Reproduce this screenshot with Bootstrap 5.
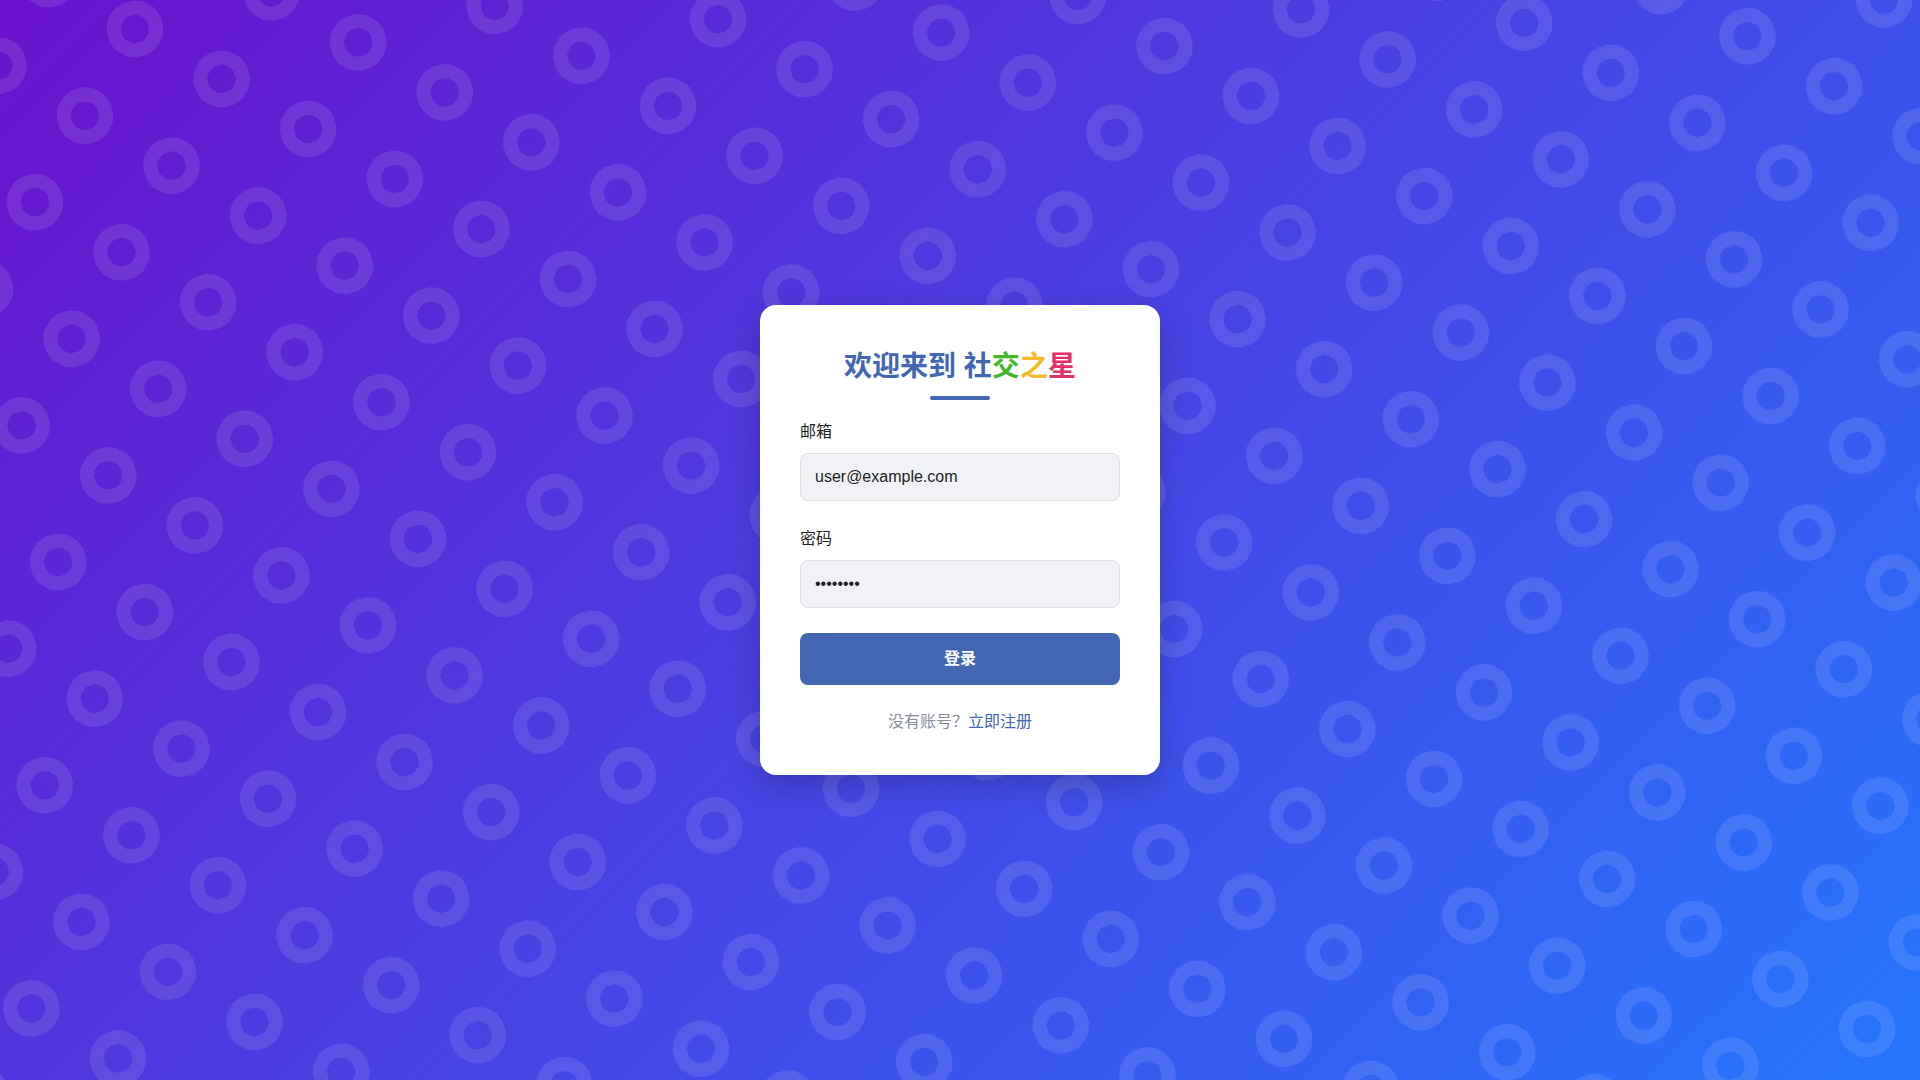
<!DOCTYPE html>
<html lang="zh-CN">
<head>
<meta charset="utf-8">
<meta name="viewport" content="width=device-width, initial-scale=1">
<title>社交之星</title>
<link href="https://cdn.jsdelivr.net/npm/bootstrap@5.3.0/dist/css/bootstrap.min.css" rel="stylesheet">
<style>
  :root { --brand: #4267b2; }
  body {
    font-family: "Liberation Sans", "Noto Sans CJK SC", sans-serif;
    line-height: 26px;
    color: #1c1e21;
    background: linear-gradient(135deg, #6a11cb 0%, #2575fc 100%);
  }
  /* rotated ring pattern behind the card */
  .ring-pattern {
    position: absolute;
    inset: -50%;
    background-image: radial-gradient(circle, transparent 20%, rgba(255,255,255,.1) 20%, rgba(255,255,255,.1) 40%, transparent 40%);
    background-size: 100px 100px;
    transform: rotate(30deg);
  }
  .login-card {
    width: 100%;
    max-width: 400px;
    padding: 40px;
    border-radius: 16px;
    box-shadow: 0 10px 30px rgba(0,0,0,.2);
  }
  .login-title { font-size: 28px; line-height: 43px; color: var(--brand); }
  .title-line { width: 60px; height: 4px; margin: 0 auto 19px; border-radius: 2px; background: var(--brand); }
  .char-green { color: #42b72a; }
  .char-yellow { color: #f7b928; }
  .char-pink { color: #e1306c; }
  .field-group { margin-bottom: 25px; }
  .login-input {
    height: 48px;
    padding: 0 14px;
    color: #1c1e21;
    background: #f0f2f5;
    border: 1px solid #dddfe2;
    border-radius: 8px;
  }
  .login-btn {
    --bs-btn-bg: var(--brand);
    --bs-btn-hover-bg: #365899;
    --bs-btn-active-bg: #365899;
    --bs-btn-color: #fff;
    --bs-btn-hover-color: #fff;
    --bs-btn-active-color: #fff;
    height: 52px;
    border: 0;
    border-radius: 8px;
  }
  .register-note { color: #8a8d9b; }
  .register-note a { color: var(--brand); }
</style>
</head>
<body>
<div class="position-relative overflow-hidden min-vh-100 d-flex align-items-center justify-content-center">
  <div class="ring-pattern" aria-hidden="true"></div>
  <main class="login-card bg-white position-relative">
    <h1 class="login-title fw-bold text-center mb-2">欢迎来到 社<span class="char-green">交</span><span class="char-yellow">之</span><span class="char-pink">星</span></h1>
    <div class="title-line"></div>
    <form>
      <div class="field-group">
        <label for="email" class="form-label">邮箱</label>
        <input type="email" id="email" class="form-control login-input" value="user@example.com">
      </div>
      <div class="field-group">
        <label for="password" class="form-label">密码</label>
        <input type="password" id="password" class="form-control login-input" value="password">
      </div>
      <button type="submit" class="btn login-btn w-100 fw-bold">登录</button>
    </form>
    <p class="register-note text-center mt-4 mb-0">没有账号？<a href="#" class="text-decoration-none">立即注册</a></p>
  </main>
</div>
<script src="https://cdn.jsdelivr.net/npm/bootstrap@5.3.0/dist/js/bootstrap.bundle.min.js"></script>
</body>
</html>
